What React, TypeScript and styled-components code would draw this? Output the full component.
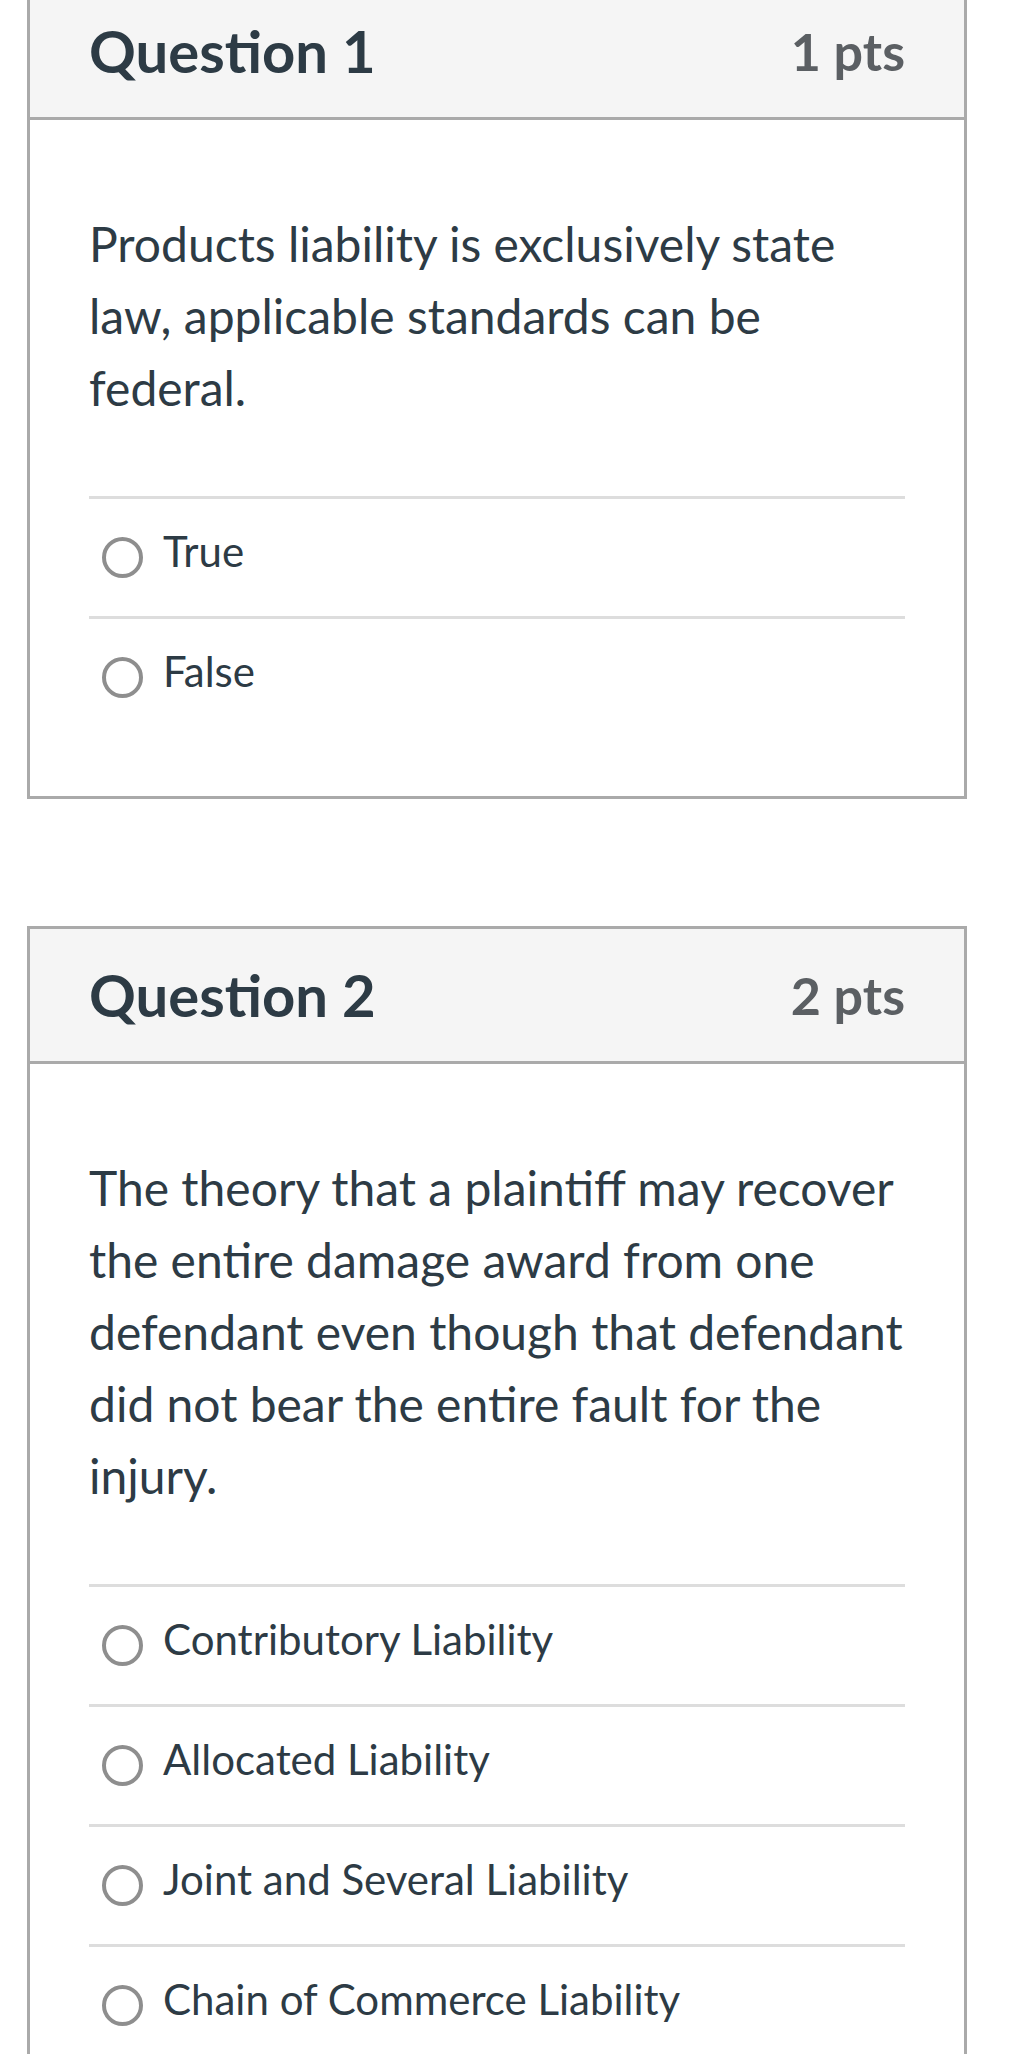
import React from "react";
import styled, { createGlobalStyle } from "styled-components";

const GlobalStyle = createGlobalStyle`
  html, body {
    margin: 0;
    padding: 0;
    background: #ffffff;
  }
  body {
    font-family: Lato, "Open Sans", "Liberation Sans", sans-serif;
    color: #2d3b45;
  }
`;

const Page = styled.div`
  margin-top: -18px;
  padding: 0 0 0 27px;
  display: flex;
  flex-direction: column;
  gap: 127px;
`;

const Card = styled.section`
  width: 940px;
  box-sizing: border-box;
  border: 3px solid #aaaaaa;
  background: #ffffff;
`;

const Header = styled.header`
  height: 132px;
  box-sizing: content-box;
  background: #f5f5f5;
  border-bottom: 3px solid #aaaaaa;
  padding: 0 59px 0 59px;
  display: flex;
  align-items: center;
  justify-content: space-between;
`;

const Title = styled.h2`
  margin: 0;
  font-family: Lato, "Liberation Sans", sans-serif;
  font-weight: 700;
  font-size: 58px;
  line-height: 1;
  color: #2d3b45;
`;

const Points = styled.span`
  font-family: Lato, "Liberation Sans", sans-serif;
  font-weight: 700;
  font-size: 52px;
  line-height: 1;
  color: #5b5f63;
`;

const Body = styled.div`
  padding: 88px 59px 60px 59px;
`;

const Prompt = styled.p`
  margin: 0 0 72px 0;
  font-size: 48px;
  line-height: 72px;
  font-weight: 400;
  color: #2d3b45;
`;

const Answers = styled.div`
  display: flex;
  flex-direction: column;
`;

const Answer = styled.label`
  height: 120px;
  box-sizing: border-box;
  border-top: 3px solid #dddddd;
  display: flex;
  align-items: center;
  gap: 20px;
  padding: 0 0 12px 13px;
  cursor: pointer;
`;

const Radio = styled.span`
  width: 41px;
  height: 41px;
  box-sizing: border-box;
  border: 4px solid #8e8e8e;
  border-radius: 50%;
  flex: none;
  margin-top: 12px;
`;

const AnswerText = styled.span`
  font-size: 42px;
  line-height: 1.2;
  color: #2d3b45;
`;

type Q = { title: string; pts: string; prompt: string; answers: string[] };

const questions: Q[] = [
  {
    title: "Question 1",
    pts: "1 pts",
    prompt:
      "Products liability is exclusively state law, applicable standards can be federal.",
    answers: ["True", "False"],
  },
  {
    title: "Question 2",
    pts: "2 pts",
    prompt:
      "The theory that a plaintiff may recover the entire damage award from one defendant even though that defendant did not bear the entire fault for the injury.",
    answers: [
      "Contributory Liability",
      "Allocated Liability",
      "Joint and Several Liability",
      "Chain of Commerce Liability",
    ],
  },
];

export default function App() {
  return (
    <>
      <GlobalStyle />
      <Page>
        {questions.map((q) => (
          <Card key={q.title}>
            <Header>
              <Title>{q.title}</Title>
              <Points>{q.pts}</Points>
            </Header>
            <Body>
              <Prompt>{q.prompt}</Prompt>
              <Answers>
                {q.answers.map((a) => (
                  <Answer key={a}>
                    <Radio />
                    <AnswerText>{a}</AnswerText>
                  </Answer>
                ))}
              </Answers>
            </Body>
          </Card>
        ))}
      </Page>
    </>
  );
}
